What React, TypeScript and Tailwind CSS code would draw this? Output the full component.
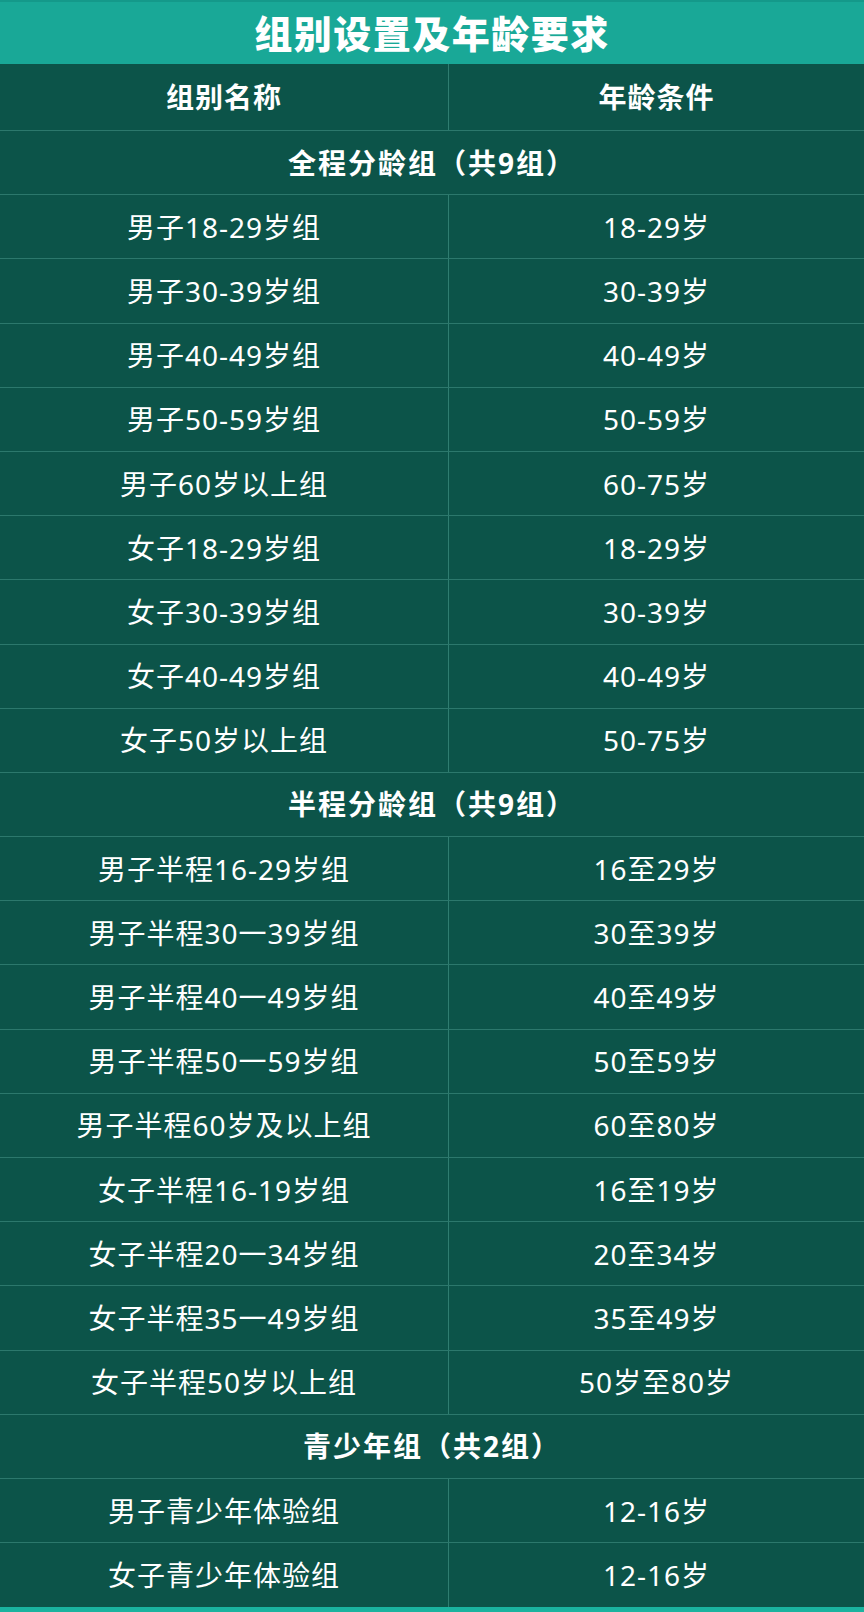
import React from "react";

type Row =
  | { kind: "section"; text: string }
  | { kind: "data"; name: string; age: string };

const rows: Row[] = [
  { kind: "section", text: "全程分龄组（共9组）" },
  { kind: "data", name: "男子18-29岁组", age: "18-29岁" },
  { kind: "data", name: "男子30-39岁组", age: "30-39岁" },
  { kind: "data", name: "男子40-49岁组", age: "40-49岁" },
  { kind: "data", name: "男子50-59岁组", age: "50-59岁" },
  { kind: "data", name: "男子60岁以上组", age: "60-75岁" },
  { kind: "data", name: "女子18-29岁组", age: "18-29岁" },
  { kind: "data", name: "女子30-39岁组", age: "30-39岁" },
  { kind: "data", name: "女子40-49岁组", age: "40-49岁" },
  { kind: "data", name: "女子50岁以上组", age: "50-75岁" },
  { kind: "section", text: "半程分龄组（共9组）" },
  { kind: "data", name: "男子半程16-29岁组", age: "16至29岁" },
  { kind: "data", name: "男子半程30一39岁组", age: "30至39岁" },
  { kind: "data", name: "男子半程40一49岁组", age: "40至49岁" },
  { kind: "data", name: "男子半程50一59岁组", age: "50至59岁" },
  { kind: "data", name: "男子半程60岁及以上组", age: "60至80岁" },
  { kind: "data", name: "女子半程16-19岁组", age: "16至19岁" },
  { kind: "data", name: "女子半程20一34岁组", age: "20至34岁" },
  { kind: "data", name: "女子半程35一49岁组", age: "35至49岁" },
  { kind: "data", name: "女子半程50岁以上组", age: "50岁至80岁" },
  { kind: "section", text: "青少年组（共2组）" },
  { kind: "data", name: "男子青少年体验组", age: "12-16岁" },
  { kind: "data", name: "女子青少年体验组", age: "12-16岁" },
];

export default function App() {
  return (
    <div
      className="w-[864px] bg-[#0c5449] text-white"
      style={{ fontFamily: '"Noto Sans", "Noto Sans CJK SC", sans-serif' }}
    >
      <div className="h-[64px] bg-[#19a897] border-t-2 border-[#14998a] flex items-center justify-center">
        <h1 className="text-[38px] font-black leading-none tracking-[1.5px]">
          组别设置及年龄要求
        </h1>
      </div>
      <div className="h-[67px] flex border-b border-[#2c786c]">
        <div className="w-[449px] border-r border-[#2f7d70] flex items-center justify-center text-[28px] font-bold leading-none tracking-[1px]">
          组别名称
        </div>
        <div className="flex-1 flex items-center justify-center text-[28px] font-bold leading-none tracking-[1px]">
          年龄条件
        </div>
      </div>
      {rows.map((r, i) => {
        const last = i === rows.length - 1;
        const border = last ? "" : "border-b border-[#2c786c]";
        if (r.kind === "section") {
          return (
            <div
              key={i}
              className={`h-[64.2px] flex items-center justify-center text-[28px] font-bold leading-none tracking-[2px] ${border}`}
            >
              {r.text}
            </div>
          );
        }
        return (
          <div key={i} className={`h-[64.2px] flex ${border}`}>
            <div className="w-[449px] border-r border-[#2f7d70] flex items-center justify-center text-[28px] leading-none tracking-[1px]">
              {r.name}
            </div>
            <div className="flex-1 flex items-center justify-center text-[28px] leading-none tracking-[1px]">
              {r.age}
            </div>
          </div>
        );
      })}
      <div className="h-[5px] bg-[#1ab39f]" />
    </div>
  );
}
